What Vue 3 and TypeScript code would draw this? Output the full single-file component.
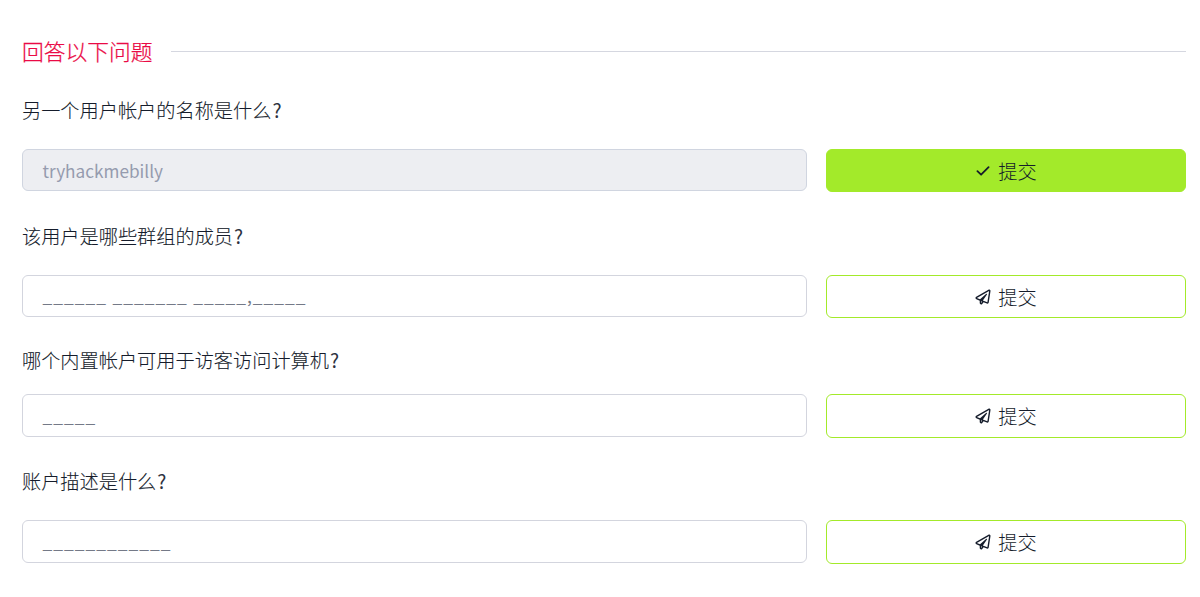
<script setup lang="ts">
interface Question {
  id: number
  title: string
  answer: string
  solved: boolean
}

const questions: Question[] = [
  { id: 1, title: '另一个用户帐户的名称是什么', answer: 'tryhackmebilly', solved: true },
  { id: 2, title: '该用户是哪些群组的成员', answer: '______ _______ _____,_____', solved: false },
  { id: 3, title: '哪个内置帐户可用于访客访问计算机', answer: '_____', solved: false },
  { id: 4, title: '账户描述是什么', answer: '____________', solved: false },
]
</script>

<template>
  <main class="panel">
    <header class="heading">
      <h2>回答以下问题</h2>
      <span class="rule"></span>
    </header>
    <section v-for="q in questions" :key="q.id" class="question" :class="'q' + q.id">
      <p class="title">{{ q.title }}<span class="mark">?</span></p>
      <div class="row">
        <div class="answer" :class="{ solved: q.solved }"><span>{{ q.answer }}</span></div>
        <button type="button" class="submit" :class="{ solved: q.solved }">
          <svg v-if="q.solved" class="icon check" viewBox="0 0 16 16">
            <path d="M2.4 8.2 L6.1 11.7 L13.6 4.2" />
          </svg>
          <svg v-else class="icon" viewBox="-16 -16 544 544">
            <path d="M440 6.5L24 246.4c-34.4 19.9-31.1 70.8 5.7 85.9L144 379.6V464c0 46.4 59.2 65.5 86.6 28.6l43.8-59.1 111.9 46.2c5.9 2.4 12.1 3.6 18.3 3.6 8.2 0 16.3-2.1 23.6-6.2 12.8-7.2 21.6-20 23.9-34.5l59.4-387.2c6.1-40.1-36.9-68.8-71.5-48.9zM192 464v-64.6l36.6 15.1L192 464zm212.6-28.7l-153.8-63.5L391 169.5c10.7-15.5-9.5-33.5-23.7-21.2L155.8 332.6 48 288 464 48l-59.4 387.3z" />
          </svg>
          <span class="label">提交</span>
        </button>
      </div>
    </section>
  </main>
</template>

<style>
body {
  background: #fff;
}
</style>

<style scoped>
.panel {
  box-sizing: border-box;
  height: 597px;
  padding: 36px 14px 0 22px;
  font-family: "Noto Sans CJK SC", sans-serif;
  font-weight: 300;
  font-size: 19.2px;
  color: #151c2b;
}
.heading {
  display: flex;
  align-items: center;
  gap: 18px;
  height: 31px;
}
h2 {
  margin: 0;
  font-size: 21.75px;
  line-height: 31px;
  height: 33px;
  font-weight: 300;
  color: #ea0a45;
  -webkit-text-stroke: 0.25px #ea0a45;
}
.rule {
  flex: 1;
  height: 1px;
  background: #d5d7e0;
}
.title {
  margin: 0;
  height: 54px;
  line-height: 30px;
  -webkit-text-stroke: 0.1px #151c2b;
}
.mark {
  margin-left: 1px;
  font-weight: 400;
  -webkit-text-stroke: 0;
  color: #2c3240;
}
.question {
  box-sizing: border-box;
  padding-top: 28px;
}
.q1 {
  height: 125px;
}
.q2 {
  height: 125px;
  padding-top: 29px;
}
.q3 {
  height: 121px;
}
.q3 .title {
  height: 49px;
}
.row {
  display: grid;
  grid-template-columns: 785px 360px;
  column-gap: 19px;
  align-items: start;
}
.answer {
  box-sizing: border-box;
  height: 42px;
  padding-left: 19.5px;
  border: 1px solid #d3d5de;
  border-radius: 6px;
  font-size: 17.4px;
  font-weight: 400;
  letter-spacing: 1.02px;
  word-spacing: 0.6px;
  line-height: 40px;
  white-space: pre;
  color: #747987;
}
.answer.solved {
  background: #edeef2;
  color: #959bae;
  font-size: 17.2px;
  letter-spacing: 0;
  line-height: 41px;
  border-color: #d0d5e0;
}
.submit {
  box-sizing: border-box;
  display: flex;
  align-items: center;
  justify-content: center;
  gap: 7px;
  height: 43px;
  padding: 0;
  border: 1px solid #a3ea2a;
  border-radius: 6px;
  background: #fff;
  font: inherit;
  line-height: 41px;
  color: #151c2b;
}
.submit.solved {
  background: #a3ea2a;
}
.label {
  margin-top: 1px;
}
.q3 .answer,
.q4 .answer {
  height: 43px;
  line-height: 42px;
}
.q3 .submit,
.q4 .submit {
  height: 44px;
}
.icon {
  width: 16px;
  height: 16px;
  fill: currentColor;
}
.check {
  fill: none;
  stroke: currentColor;
  stroke-width: 1.8;
  stroke-linecap: round;
  stroke-linejoin: round;
}
</style>
